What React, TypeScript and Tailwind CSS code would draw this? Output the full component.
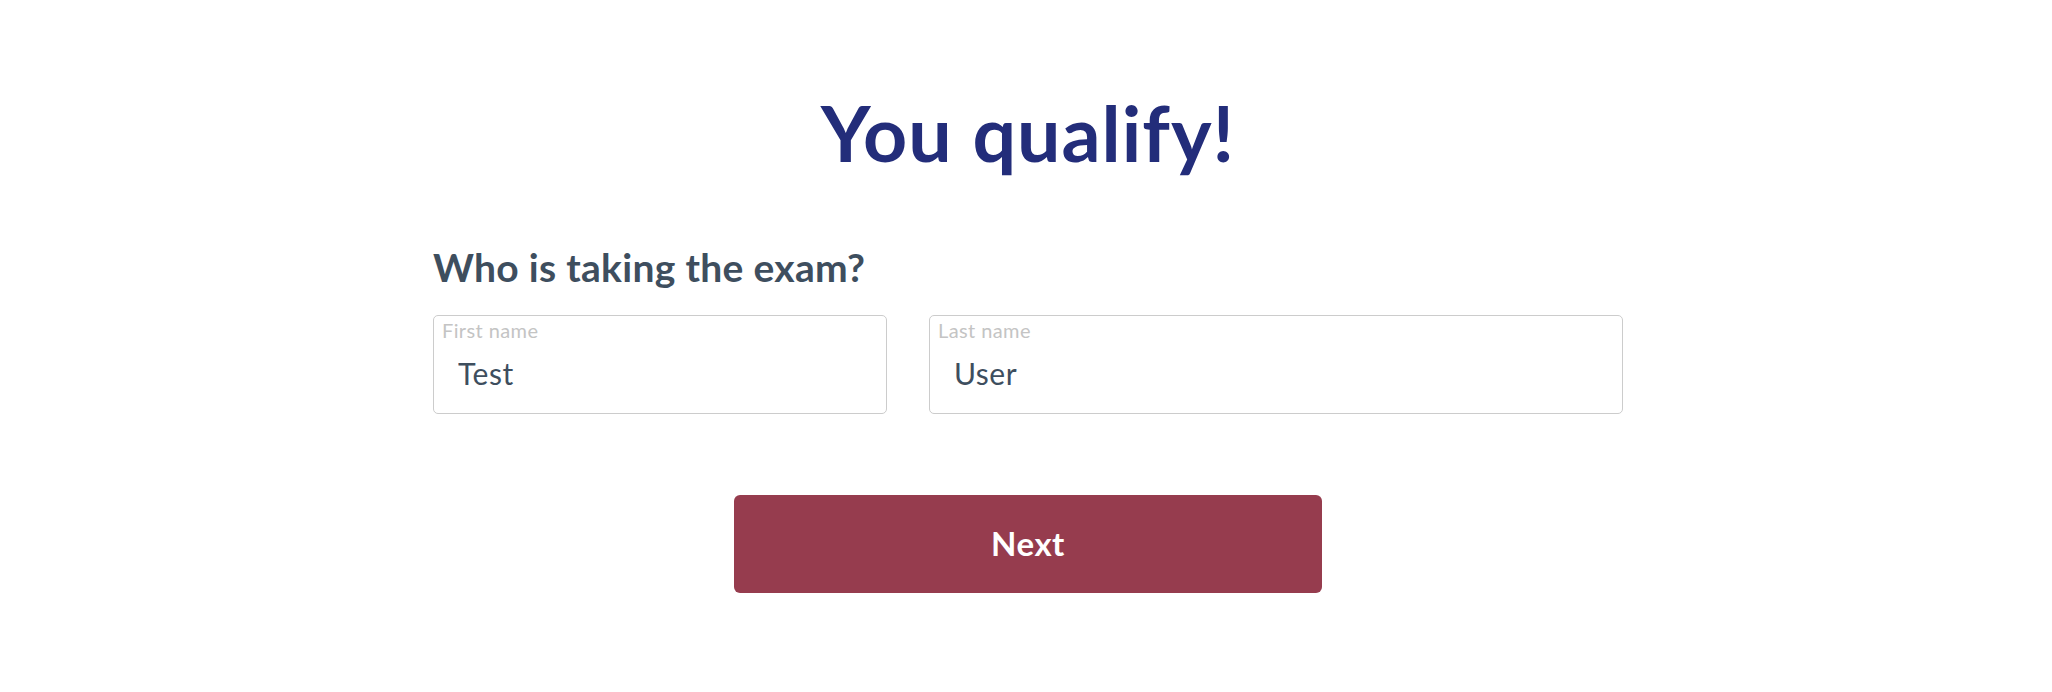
export default function App() {
  return (
    <div className="min-h-screen bg-white font-['Lato',sans-serif] pt-[87px] pl-[4px]">
      <h1 className="text-center text-[77px] leading-[90px] font-bold tracking-[1px] text-[#232d7a]">You qualify!</h1>
      <div className="mx-auto w-[1190px] mt-[67px]">
        <h2 className="text-[39px] leading-[46px] font-bold tracking-[0.3px] text-[#3e4e5e]">Who is taking the exam?</h2>
        <div className="flex gap-[42px] mt-[25px]">
          <NameField label="First name" value="Test" width="w-[454px]" />
          <NameField label="Last name" value="User" width="flex-1" />
        </div>
        <div className="flex justify-center mt-[81px]">
          <button className="w-[588px] h-[98px] rounded-[6px] bg-[#963c4e] text-white text-[33px] font-bold tracking-[0.5px]">
            Next
          </button>
        </div>
      </div>
    </div>
  );
}

function NameField({ label, value, width }: { label: string; value: string; width: string }) {
  return (
    <label className={`${width} h-[99px] border border-[#cccccc] rounded-[5px] flex flex-col pt-[3px]`}>
      <span className="pl-[8px] text-[20px] leading-[23px] tracking-[0.4px] text-[#c4c4c4]">{label}</span>
      <input
        defaultValue={value}
        className="mt-[13px] pl-[24px] text-[30px] leading-[36px] tracking-[0.5px] text-[#3e4e5e] outline-none bg-transparent"
      />
    </label>
  );
}
